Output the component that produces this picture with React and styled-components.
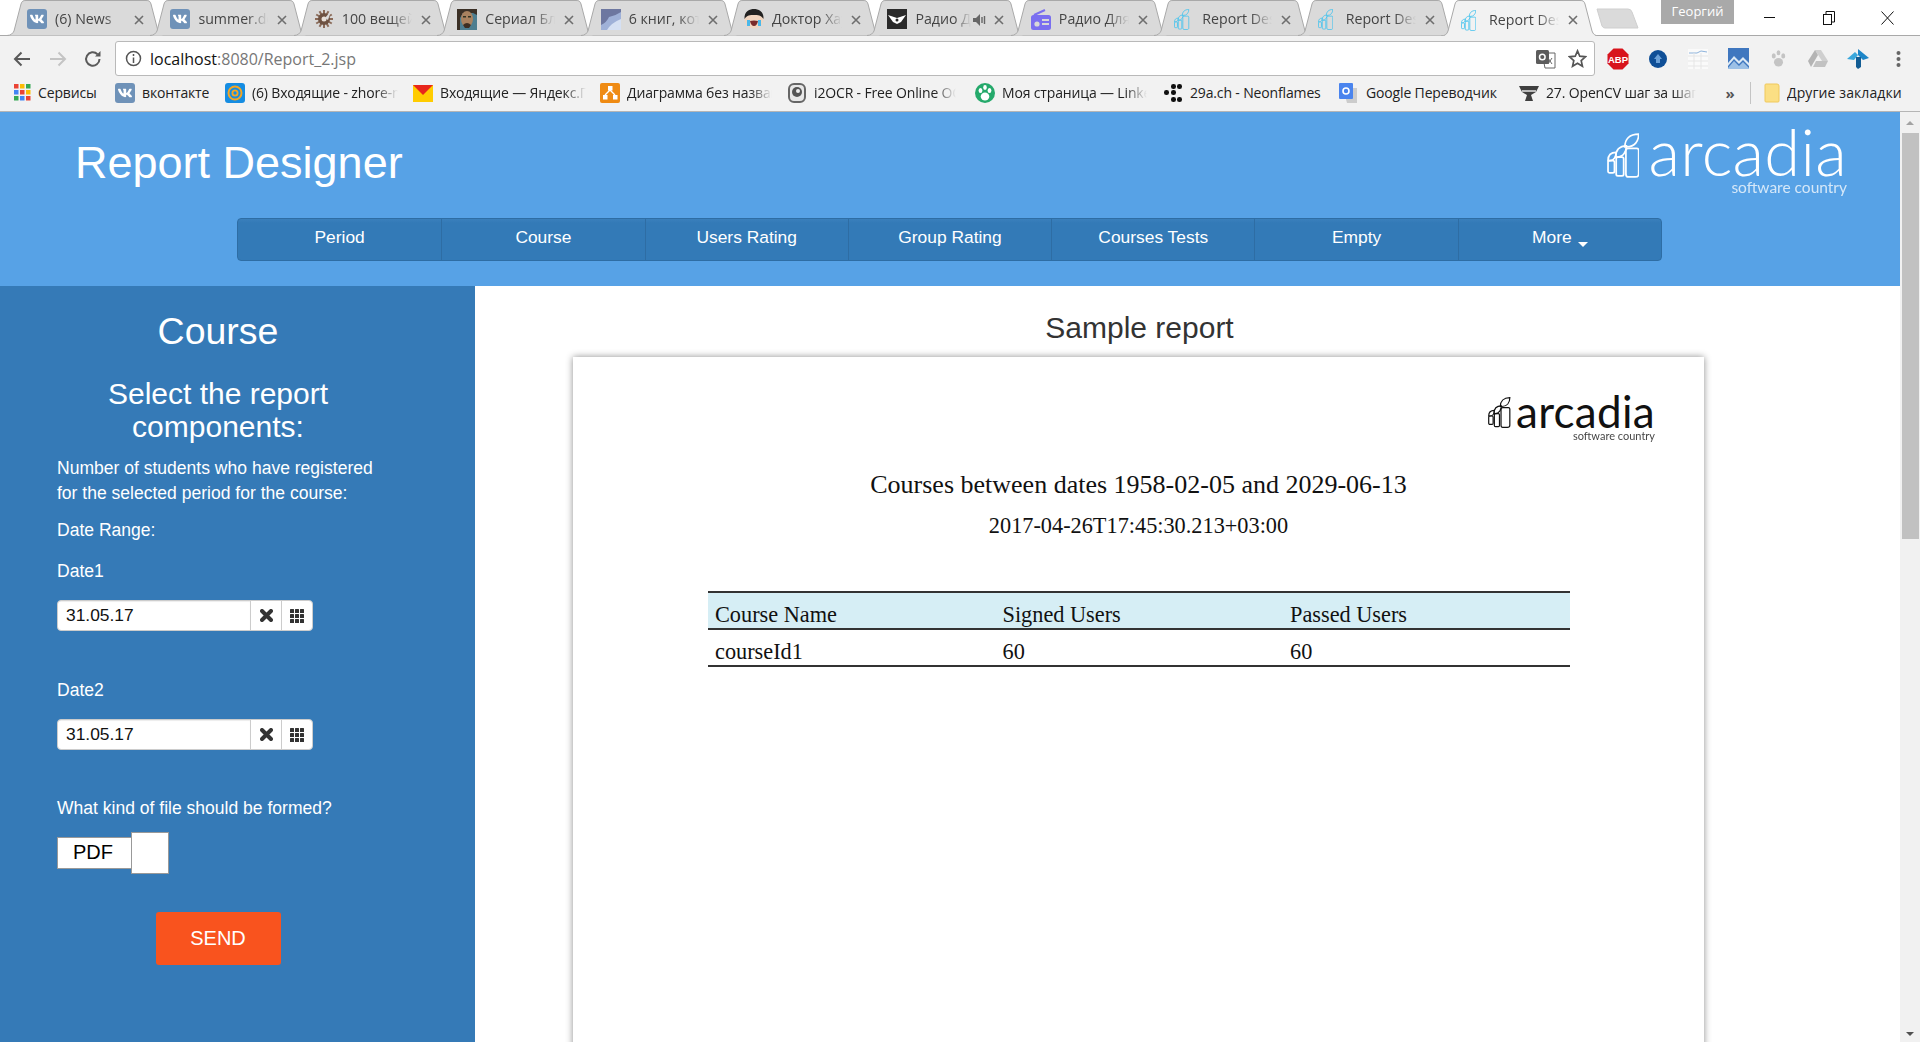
import React from "react";
import styled, { createGlobalStyle } from "styled-components";
import { FaVk } from "react-icons/fa";

const Global = createGlobalStyle`
  html, body { margin: 0; padding: 0; height: 100%; overflow: hidden; background: #fff; }
  * { box-sizing: border-box; }
  #root { height: 1042px; }
`;

const Root = styled.div`
  width: 1920px;
  height: 1042px;
  display: flex;
  flex-direction: column;
  overflow: hidden;
  font-family: "Liberation Sans", Arial, sans-serif;
`;

/* ---------- browser chrome ---------- */
const TabStrip = styled.div`
  height: 36px;
  display: flex;
  background: linear-gradient(#fff 35px, #a9a9a9 35px);
  padding-left: 7px;
  flex: none;
`;
const Tab = styled.div`
  position: relative;
  width: 158px;
  height: ${(p) => (p.$active ? 36 : 35)}px;
  margin-right: -14.6px;
  z-index: ${(p) => (p.$active ? 2 : 1)};
  display: flex;
  align-items: center;
  padding-left: 20px;
  flex: none;
`;
const TabShape = styled.svg`
  position: absolute;
  inset: 0;
  width: 158px;
  height: 36px;
`;
const TabIconBox = styled.span`
  position: relative;
  width: 20px;
  height: 20px;
  flex: none;
  display: block;
  margin-top: 3px;
`;
const TabTitle = styled.span`
  position: relative;
  margin-left: 8px;
  margin-top: 2px;
  width: ${(p) => (p.$short ? 56 : 70)}px;
  overflow: hidden;
  white-space: nowrap;
  font: 14.2px "Open Sans", sans-serif;
  color: #444;
  -webkit-mask-image: linear-gradient(90deg, #000 70%, transparent 100%);
  mask-image: linear-gradient(90deg, #000 70%, transparent 100%);
`;
const TabClose = styled.svg`
  position: absolute;
  left: 127px;
  top: 15px;
  width: 10px;
  height: 10px;
`;
const Speaker = styled.svg`
  position: absolute;
  left: 106px;
  top: 14px;
  width: 13px;
  height: 12px;
`;
const NewTab = styled.svg`
  position: relative;
  margin-left: 12px;
  margin-top: 8px;
  width: 44px;
  height: 21px;
  flex: none;
`;
const WindowArea = styled.div`
  margin-left: auto;
  padding-right: 3px;
  display: flex;
  height: 35px;
  align-items: flex-start;
`;
const Profile = styled.div`
  width: 73px;
  height: 24px;
  background: #a9a9a9;
  color: #fff;
  font: 13px "Open Sans", sans-serif;
  text-align: center;
  line-height: 22px;
  margin-right: 6px;
`;
const WinButton = styled.button`
  width: 59px;
  height: 35px;
  border: 0;
  background: none;
  padding: 0;
  display: flex;
  align-items: center;
  justify-content: center;
`;

const Toolbar = styled.div`
  height: 40px;
  background: #f2f2f2;
  display: flex;
  align-items: center;
  flex: none;
  padding-top: 5px;
`;
const NavIcons = styled.div`
  width: 115px;
  padding-left: 13px;
  display: flex;
  gap: 17.5px;
  align-items: center;
  flex: none;
`;
const AddressBox = styled.div`
  width: 1480px;
  height: 35px;
  background: #fff;
  border: 1px solid #b9b9b9;
  border-radius: 3px;
  display: flex;
  align-items: center;
  padding-left: 9px;
  flex: none;
  font: 16px "Open Sans", sans-serif;
  color: #111;
`;
const UrlHost = styled.span`
  margin-left: 8px;
`;
const UrlTail = styled.span`
  color: #777;
`;
const AddressActions = styled.div`
  margin-left: auto;
  display: flex;
  align-items: center;
  gap: 12px;
  padding-right: 7px;
`;
const ExtBar = styled.div`
  display: grid;
  grid-template-columns: repeat(8, 40px);
  justify-items: center;
  align-items: center;
  padding-left: 3px;
`;

const Bookmarks = styled.div`
  height: 36px;
  background: #f2f2f2;
  border-bottom: 1px solid #b5b5b5;
  display: flex;
  align-items: center;
  padding: 0 0 2px 14px;
  flex: none;
`;
const Bookmark = styled.div`
  width: ${(p) => p.$w}px;
  display: flex;
  align-items: center;
  gap: 7px;
  flex: none;
`;
const BookmarkText = styled.span`
  font: 14px "Open Sans", sans-serif;
  color: #222;
  white-space: nowrap;
  overflow: hidden;
  letter-spacing: ${(p) => (p.$wide ? 0.1 : -0.15)}px;
  ${(p) =>
    p.$fade
      ? `width:${p.$fade}px;-webkit-mask-image:linear-gradient(90deg,#000 85%,transparent);mask-image:linear-gradient(90deg,#000 85%,transparent);`
      : ""}
`;
const Chevrons = styled.span`
  font: bold 15px "Open Sans", sans-serif;
  color: #555;
  width: 30px;
  flex: none;
  text-align: center;
  margin-left: -4px;
`;
const BarSep = styled.span`
  width: 1px;
  height: 22px;
  background: #c4c4c4;
  margin: 0 13px 0 5px;
  flex: none;
`;

/* ---------- page ---------- */
const Viewport = styled.div`
  flex: 1;
  display: flex;
  min-height: 0;
`;
const Page = styled.div`
  width: 1900px;
  flex: none;
  display: flex;
  flex-direction: column;
`;
const Scrollbar = styled.div`
  width: 20px;
  flex: none;
  background: #f1f1f1;
  display: flex;
  flex-direction: column;
  align-items: center;
`;
const ScrollArrow = styled.div`
  height: ${(p) => (p.$down ? 17 : 21)}px;
  width: 100%;
  display: flex;
  align-items: center;
  justify-content: center;
  flex: none;
  &::before {
    content: "";
    border-left: 4px solid transparent;
    border-right: 4px solid transparent;
    ${(p) => (p.$down ? "border-top" : "border-bottom")}: 4px solid ${(p) => (p.$down ? "#505050" : "#a3a3a3")};
  }
`;
const ScrollThumb = styled.div`
  width: 17px;
  height: 406px;
  background: #c1c1c1;
  flex: none;
  margin-left: 1px;
`;
const ScrollSpace = styled.div`
  flex: 1;
`;

const Header = styled.header`
  height: 174px;
  background: #57a2e6;
  display: flex;
  flex-direction: column;
  flex: none;
`;
const HeaderTop = styled.div`
  height: 106px;
  padding: 0 53px 0 75px;
  display: flex;
  justify-content: space-between;
  align-items: flex-start;
`;
const Title = styled.h1`
  margin: 25px 0 0;
  font-size: 45px;
  line-height: 52px;
  font-weight: 400;
  color: #fff;
`;
const Nav = styled.nav`
  width: 1425px;
  height: 43px;
  margin: 0 0 0 237px;
  display: grid;
  grid-template-columns: repeat(7, 1fr);
  background: linear-gradient(#3a80bc, #337ab7 4px);
  border: 1px solid #2e6da4;
  border-radius: 4px;
`;
const NavItem = styled.a`
  display: flex;
  align-items: center;
  justify-content: center;
  padding-bottom: 4px;
  font-size: 17.4px;
  color: #fff;
  & + & {
    border-left: 1px solid #2e6da4;
  }
`;
const Caret = styled.span`
  display: inline-block;
  margin: 14px 0 0 6px;
  border-left: 5px solid transparent;
  border-right: 5px solid transparent;
  border-top: 5px solid #fff;
`;

const Body = styled.div`
  flex: 1;
  display: flex;
  min-height: 0;
`;
const Sidebar = styled.aside`
  width: 475px;
  flex: none;
  background: #357ab7;
  color: #fff;
  padding: 23px 0 0 57px;
`;
const SideTitle = styled.h2`
  margin: 0 0 0 -57px;
  padding-right: 39px;
  text-align: center;
  font-size: 37.5px;
  line-height: 44px;
  font-weight: 400;
`;
const SideSub = styled.h3`
  margin: 24px 0 0 -57px;
  padding: 0 39px 0 0;
  text-align: center;
  font-size: 30px;
  line-height: 33px;
  font-weight: 400;
`;
const SideText = styled.p`
  margin: ${(p) => p.$top}px 0 0;
  font-size: 17.55px;
  line-height: 25px;
`;
const DateGroup = styled.div`
  margin-top: 16px;
  width: 256px;
  height: 31px;
  display: flex;
  background: #fff;
  border: 1px solid #ccc;
  border-radius: 4px;
  overflow: hidden;
`;
const DateValue = styled.div`
  flex: 1;
  padding-left: 8px;
  font-size: 17.4px;
  line-height: 28px;
  color: #111;
  box-shadow: inset 0 1px 1px rgba(0, 0, 0, 0.075);
`;
const DateBtn = styled.div`
  width: 31px;
  flex: none;
  border-left: 1px solid #ccc;
  display: flex;
  align-items: center;
  justify-content: center;
`;
const FileRow = styled.div`
  margin-top: 11px;
  display: flex;
  align-items: center;
`;
const Select = styled.div`
  width: 74px;
  height: 32px;
  background: #fff;
  border: 1px solid #999;
  border-right: 0;
  padding-left: 15px;
  font-size: 20px;
  line-height: 28px;
  color: #000;
  flex: none;
`;
const SelectArrow = styled.div`
  width: 38px;
  height: 42px;
  background: #fff;
  border: 1px solid #999;
  flex: none;
`;
const SendRow = styled.div`
  margin: 38px 0 0 -57px;
  padding-right: 39px;
  display: flex;
  justify-content: center;
`;
const Send = styled.button`
  width: 125px;
  height: 53px;
  border: 0;
  border-radius: 3px;
  background: #f9531e;
  color: #fff;
  font: 20px "Liberation Sans", Arial, sans-serif;
`;

const Main = styled.main`
  flex: 1;
  background: #fff;
  padding-left: 98px;
  min-width: 0;
`;
const MainTitle = styled.h2`
  width: 1131px;
  margin: 24px 0 0;
  padding-left: 2px;
  text-align: center;
  font-size: 30px;
  line-height: 36px;
  font-weight: 400;
  color: #333;
`;
const Paper = styled.section`
  width: 1131px;
  height: 900px;
  margin-top: 11px;
  background: #fff;
  box-shadow: 0 0 7px rgba(0, 0, 0, 0.45);
  padding: 40px 49px 0 135px;
  font-family: "Liberation Serif", "Times New Roman", serif;
  color: #111;
`;
const PaperLogoRow = styled.div`
  display: flex;
  justify-content: flex-end;
`;
const ReportTitle = styled.div`
  margin: 26px 86px 0 0;
  text-align: center;
  font-size: 26px;
  line-height: 36px;
`;
const ReportDate = styled.div`
  margin: 8px 86px 0 0;
  text-align: center;
  font-size: 22.3px;
  line-height: 30px;
`;
const ReportTable = styled.div`
  margin: 50px 0 0;
  width: 862px;
  display: grid;
  grid-template-columns: 287.5px 287.5px 287px;
  font-size: 22.3px;
`;
const HeadCell = styled.div`
  height: 39px;
  background: #d6eef5;
  border-top: 2px solid #333;
  border-bottom: 2px solid #333;
  padding: 9px 0 0 7px;
  line-height: 26px;
`;
const RowCell = styled.div`
  height: 37px;
  border-bottom: 2px solid #333;
  padding: 8.5px 0 0 7px;
  line-height: 26px;
`;

/* ---------- logo ---------- */
const LogoWrap = styled.div`
  display: flex;
  align-items: flex-start;
  gap: ${(p) => (p.$small ? 5 : 9)}px;
  margin-top: ${(p) => (p.$small ? 0 : 21)}px;
  color: ${(p) => p.$color};
`;
const LogoWords = styled.div`
  display: flex;
  flex-direction: column;
  align-items: flex-end;
  margin-top: ${(p) => (p.$small ? -3 : -6)}px;
`;
const LogoName = styled.span`
  font-family: Lato, sans-serif;
  font-weight: ${(p) => (p.$small ? 400 : 300)};
  font-size: ${(p) => (p.$small ? 44 : 65)}px;
  line-height: ${(p) => (p.$small ? 34 : 48)}px;
  letter-spacing: 0.3px;
`;
const LogoTag = styled.span`
  font-family: Lato, sans-serif;
  font-weight: 400;
  font-size: ${(p) => (p.$small ? 11 : 15.5)}px;
  line-height: ${(p) => (p.$small ? 11 : 17)}px;
  opacity: ${(p) => (p.$small ? 0.8 : 0.75)};
  margin-top: ${(p) => (p.$small ? 2 : 4)}px;
`;

const Mark = ({ size, color }) => (
  <svg width={(size * 32) / 44} height={size} viewBox="0 0 32 44" fill="none" stroke={color} strokeWidth="1.7" style={{ flex: "none" }}>
    <path d="M17.5 13.5 C17.5 6 22 1 31 1 C31 8 27 13.5 19.5 13.5 Z" />
    <path d="M8.5 23.5 C8.5 17 12 12.5 19 12.5 C19 18 16 23.5 10 23.5 Z" />
    <path d="M1 27 C1 22 4 19 9 19 C9 23 7 27 3 27 Z" />
    <rect x="1" y="27" width="6.3" height="12" rx="1.6" />
    <rect x="9" y="23.5" width="7.3" height="18.5" rx="1.6" />
    <path d="M18.5 17 C18.5 15.5 19.5 15 21 15 H29 C30 15 31 15.5 31 17 V40 C31 42 29.5 43 27.5 43 H21 C19.5 43 18.5 42 18.5 40 Z" />
  </svg>
);

const Logo = ({ small, color }) => (
  <LogoWrap $color={color} $small={small}>
    <Mark size={small ? 31 : 45} color={color} />
    <LogoWords $small={small}>
      <LogoName $small={small}>arcadia</LogoName>
      <LogoTag $small={small}>software country</LogoTag>
    </LogoWords>
  </LogoWrap>
);

/* ---------- favicons ---------- */
const VkIcon = ({ s = 20 }) => (
  <svg width={s} height={s} viewBox="0 0 20 20">
    <rect width="20" height="20" rx="3" fill="#6f92b8" />
    <FaVk x="2.5" y="2.5" size="15" color="#fff" />
  </svg>
);
const GearIcon = () => (
  <svg width="20" height="20" viewBox="0 0 20 20">
    <g stroke="#8a6a58" strokeWidth="2">
      {[0, 30, 60, 90, 120, 150].map((a) => (
        <line key={a} x1="1" y1="10" x2="19" y2="10" transform={`rotate(${a} 10 10)`} />
      ))}
    </g>
    <circle cx="10" cy="10" r="6" fill="#6e5242" />
    <circle cx="10" cy="10" r="2.5" fill="#e8e0d8" />
    <path d="M11 9 L17 2 L14 11Z" fill="#ddd" />
  </svg>
);
const FaceIcon = () => (
  <svg width="20" height="21" viewBox="0 0 20 21">
    <rect width="20" height="21" fill="#4d7e90" />
    <path d="M0 0H20V6L16 4H6L3 9V21H0Z" fill="#3b3026" />
    <ellipse cx="10" cy="10" rx="6" ry="8" fill="#a9825f" />
    <path d="M6 16 Q10 12 14 16 L12 19H8Z" fill="#3d2e22" />
    <rect x="6" y="7" width="3" height="1.5" fill="#332" />
    <rect x="11" y="7" width="3" height="1.5" fill="#332" />
  </svg>
);
const BookIcon = () => (
  <svg width="20" height="21" viewBox="0 0 20 21">
    <rect width="20" height="21" fill="#6d77a0" />
    <path d="M0 21V16 Q6 13 8 8 Q14 7 20 3V21Z" fill="#9fb1d8" />
    <path d="M6 21 Q10 14 20 10V21Z" fill="#d5e0f3" />
  </svg>
);
const CartoonIcon = () => (
  <svg width="20" height="20" viewBox="0 0 20 20">
    <circle cx="10" cy="10" r="9.5" fill="#f1d5c0" />
    <path d="M0.5 10 C0 2 6 0 10 0 C14 0 20 2 19.5 10 C17 6 14 6 10 6 C6 6 3 6 0.5 10Z" fill="#222" />
    <path d="M6 12 Q10 11 14 12 Q13 17 10 17 Q7 17 6 12Z" fill="#7a2a2a" />
    <path d="M3 11 L6 11 L6 17 L3 17Z M14 11 L17 11 L17 17 L14 17Z" fill="#4ab8ea" />
  </svg>
);
const MaskIcon = () => (
  <svg width="20" height="20" viewBox="0 0 20 20">
    <rect width="20" height="20" fill="#2a2a2a" />
    <path d="M1 6 L10 9 L19 6 L14 13 L10 15 L6 13Z" fill="#fff" />
    <circle cx="10" cy="11" r="1.5" fill="#2a2a2a" />
  </svg>
);
const RadioIcon = () => (
  <svg width="20" height="21" viewBox="0 0 20 21">
    <path d="M3 6 L14 1" stroke="#7a6ff0" strokeWidth="2" />
    <rect y="6" width="20" height="15" rx="2.5" fill="#7a6ff0" />
    <circle cx="6" cy="15" r="2.6" fill="#d8d8d8" />
    <rect x="11" y="10" width="7" height="2" fill="#d8d8d8" />
    <rect x="11" y="14" width="7" height="2" fill="#d8d8d8" />
  </svg>
);
const ReportIcon = () => <Mark size={21} color="#48c3ee" />;

const AppsIcon = () => {
  const c = ["#ea4335", "#fbbc05", "#34a853", "#4285f4", "#ea4335", "#fbbc05", "#34a853", "#4285f4", "#ea4335"];
  return (
    <svg width="17" height="17" viewBox="0 0 17 17">
      {c.map((f, i) => (
        <rect key={i} x={(i % 3) * 6} y={Math.floor(i / 3) * 6} width="4.5" height="4.5" fill={f} />
      ))}
    </svg>
  );
};
const AtIcon = () => (
  <svg width="20" height="20" viewBox="0 0 20 20">
    <rect width="20" height="20" rx="3" fill="#168de2" />
    <circle cx="10" cy="10" r="6.5" fill="none" stroke="#f5a623" strokeWidth="2" />
    <circle cx="10" cy="10" r="2.6" fill="none" stroke="#f5a623" strokeWidth="1.8" />
  </svg>
);
const YandexIcon = () => (
  <svg width="20" height="20" viewBox="0 0 20 20">
    <rect y="2" width="20" height="17" fill="#ffcc00" />
    <path d="M0 2H20L10 12Z" fill="#e8261c" />
  </svg>
);
const DiagramIcon = () => (
  <svg width="20" height="20" viewBox="0 0 20 20">
    <rect width="20" height="20" rx="2" fill="#ef8b14" />
    <g fill="#fff">
      <rect x="8" y="3" width="4.5" height="4.5" />
      <rect x="3" y="12" width="4.5" height="4.5" />
      <rect x="13" y="12" width="4.5" height="4.5" />
    </g>
    <path d="M10 7 L5 12 M10 7 L15 12" stroke="#fff" strokeWidth="1.4" />
  </svg>
);
const OcrIcon = () => (
  <svg width="20" height="20" viewBox="0 0 20 20">
    <rect x="2" y="1" width="16" height="18" rx="5" fill="#e8e8e8" stroke="#666" strokeWidth="2" />
    <circle cx="10" cy="9" r="5" fill="#555" />
    <circle cx="11" cy="8" r="2" fill="#eee" />
  </svg>
);
const PawIcon = ({ s = 20, fill = "#fff", bg = "#25a96b" }) => (
  <svg width={s} height={s} viewBox="0 0 20 20">
    {bg !== "none" && <circle cx="10" cy="10" r="10" fill={bg} />}
    <g fill={fill}>
      <ellipse cx="5.5" cy="7.5" rx="1.9" ry="2.5" />
      <ellipse cx="14.5" cy="7.5" rx="1.9" ry="2.5" />
      <ellipse cx="10" cy="4.5" rx="1.8" ry="2.4" />
      <ellipse cx="10" cy="13.5" rx="4.3" ry="4" />
    </g>
  </svg>
);
const DotsIcon = () => (
  <svg width="20" height="20" viewBox="0 0 20 20" fill="#111">
    <rect x="8" y="1" width="5" height="5" rx="2.3" />
    <rect x="14" y="1" width="5" height="5" rx="2.3" />
    <rect x="1" y="7" width="5" height="5" rx="2.3" />
    <rect x="8" y="7" width="5" height="5" rx="2.3" />
    <rect x="8" y="14" width="5" height="5" rx="2.3" />
    <rect x="14" y="14" width="5" height="5" rx="2.3" />
  </svg>
);
const TranslateIcon = () => (
  <svg width="20" height="20" viewBox="0 0 20 20">
    <path d="M4 5H18V20H8Z" fill="#ccc" />
    <rect width="14" height="16" rx="1" fill="#4a84ee" />
    <circle cx="7" cy="8" r="3" fill="none" stroke="#fff" strokeWidth="1.6" />
  </svg>
);
const CvIcon = () => (
  <svg width="20" height="20" viewBox="0 0 20 20">
    <path d="M0 3H20L17 9L12 12L14 18H6L8 12L3 9Z" fill="#3f3f3f" />
    <path d="M3 8H17" stroke="#bbb" strokeWidth="2" />
  </svg>
);
const FolderIcon = () => (
  <svg width="16" height="20" viewBox="0 0 16 20">
    <path d="M1 2 Q1 1 2 1 H13 Q15 1 15 3 V18 Q15 19 14 19 H2 Q1 19 1 18Z" fill="#fbdf84" stroke="#f0c95c" />
  </svg>
);

const Glyph = {
  back: (
    <svg width="18" height="16" viewBox="0 0 18 16" fill="none" stroke="#5a5a5a" strokeWidth="2">
      <path d="M17 8H2 M8.5 1.5 L2 8 L8.5 14.5" />
    </svg>
  ),
  forward: (
    <svg width="18" height="16" viewBox="0 0 18 16" fill="none" stroke="#c4c4c4" strokeWidth="2">
      <path d="M1 8H16 M9.5 1.5 L16 8 L9.5 14.5" />
    </svg>
  ),
  reload: (
    <svg width="18" height="18" viewBox="0 0 18 18" fill="none" stroke="#5a5a5a" strokeWidth="2">
      <path d="M15.5 9 A6.7 6.7 0 1 1 13.5 4.2" />
      <path d="M11 6.5H16.5V1Z" fill="#5a5a5a" stroke="none" />
    </svg>
  ),
  info: (
    <svg width="17" height="17" viewBox="0 0 17 17" fill="none" stroke="#555" strokeWidth="1.5">
      <circle cx="8.5" cy="8.5" r="7" />
      <path d="M8.5 7.5V13 M8.5 4V6" />
    </svg>
  ),
  star: (
    <svg width="19" height="19" viewBox="0 0 20 20" fill="none" stroke="#555" strokeWidth="1.8">
      <path d="M10 2 L12.4 7.6 L18.4 8.2 L13.9 12.2 L15.2 18.2 L10 15.1 L4.8 18.2 L6.1 12.2 L1.6 8.2 L7.6 7.6Z" />
    </svg>
  ),
  gt: (
    <svg width="20" height="20" viewBox="0 0 20 20">
      <path d="M6 4H19V19H9Z" fill="#fff" stroke="#666" />
      <rect y="1" width="13" height="14" rx="1.5" fill="#5c5c5c" />
      <circle cx="6.3" cy="8" r="2.8" fill="none" stroke="#fff" strokeWidth="1.5" />
      <path d="M12 9 L16 15 M16 9 L12 15" stroke="#666" />
    </svg>
  ),
  abp: (
    <svg width="22" height="22" viewBox="0 0 22 22">
      <path d="M6.5 0.5H15.5L21.5 6.5V15.5L15.5 21.5H6.5L0.5 15.5V6.5Z" fill="#d8141c" />
      <text x="11" y="14.5" textAnchor="middle" fill="#fff" fontSize="9.5" fontWeight="700" fontFamily="Liberation Sans">ABP</text>
    </svg>
  ),
  up: (
    <svg width="20" height="20" viewBox="0 0 20 20">
      <circle cx="10" cy="10" r="9" fill="#0f4f97" />
      <path d="M10 5 L14 10 H12 V14 H8 V10 H6Z" fill="#6aa0d8" />
    </svg>
  ),
  doc: (
    <svg width="22" height="22" viewBox="0 0 22 22">
      <rect x="1" y="1" width="20" height="20" fill="#fafafa" />
      <path d="M2 5 L10 5 L14 3 L20 4" stroke="#8fb4dc" fill="none" />
      <path d="M1 8H21 M1 13H21 M1 18H21 M7 5V21 M14 5V21" stroke="#e6e6e6" />
    </svg>
  ),
  chart: (
    <svg width="21" height="21" viewBox="0 0 21 21">
      <rect width="21" height="21" fill="#3f77bf" />
      <path d="M0 15 L6 8 L11 13 L15 9 L21 15 V18 L15 12 L11 16 L6 11 L0 18 Z" fill="#dce9f5" />
      <path d="M0 20 L6 13 L11 18 L15 14 L21 20 V21 H0Z" fill="#9cc0e6" />
    </svg>
  ),
  drive: (
    <svg width="20" height="19" viewBox="0 0 20 19">
      <path d="M7 1H13L20 12H14Z" fill="#cfcfcf" />
      <path d="M7 1L0 12L3 18L10 6Z" fill="#b4b4b4" />
      <path d="M5 18H17L20 12H8Z" fill="#c2c2c2" />
    </svg>
  ),
  arrowExt: (
    <svg width="22" height="20" viewBox="0 0 22 20">
      <path d="M11 0 L22 9 L16 11 L11 6 Z" fill="#1d86c8" />
      <path d="M0 10 L8 3 L11 6 L7 11Z" fill="#3aa7dc" />
      <path d="M9 8 H14 V18 L11 20 L9 18Z" fill="#135d94" />
    </svg>
  ),
  dots: (
    <svg width="5" height="18" viewBox="0 0 5 18" fill="#666">
      <circle cx="2.5" cy="3" r="2" />
      <circle cx="2.5" cy="9" r="2" />
      <circle cx="2.5" cy="15" r="2" />
    </svg>
  ),
  times: (
    <svg width="13" height="13" viewBox="0 0 13 13" stroke="#333" strokeWidth="4" strokeLinecap="round">
      <path d="M2 2L11 11M11 2L2 11" />
    </svg>
  ),
  grid: (
    <svg width="14" height="14" viewBox="0 0 14 14" fill="#333">
      {[0, 5, 10].flatMap((y) => [0, 5, 10].map((x) => <rect key={`${x}-${y}`} x={x} y={y} width="4" height="4" rx="0.5" />))}
    </svg>
  ),
};

const TABS = [
  { t: "(6) News", i: <VkIcon /> },
  { t: "summer.dev", i: <VkIcon /> },
  { t: "100 вещей", i: <GearIcon /> },
  { t: "Сериал Блудливая", i: <FaceIcon /> },
  { t: "6 книг, которые", i: <BookIcon /> },
  { t: "Доктор Хаус", i: <CartoonIcon /> },
  { t: "Радио Дача", i: <MaskIcon />, sound: true },
  { t: "Радио Для Вас", i: <RadioIcon /> },
  { t: "Report Designer", i: <ReportIcon /> },
  { t: "Report Designer", i: <ReportIcon /> },
  { t: "Report Designer", i: <ReportIcon />, active: true },
];

const BOOKMARKS = [
  { w: 101, t: "Сервисы", i: <AppsIcon /> },
  { w: 110, t: "вконтакте", i: <VkIcon /> },
  { w: 188, t: "(6) Входящие - zhore-mail", i: <AtIcon />, f: 146 },
  { w: 187, t: "Входящие — Яндекс.Почта", i: <YandexIcon />, f: 146 },
  { w: 187, t: "Диаграмма без названия", i: <DiagramIcon />, f: 145 },
  { w: 188, t: "i2OCR - Free Online OCR", i: <OcrIcon />, f: 142 },
  { w: 188, t: "Моя страница — LinkedIn", i: <PawIcon />, f: 145 },
  { w: 176, t: "29a.ch - Neonflames", i: <DotsIcon /> },
  { w: 180, t: "Google Переводчик", i: <TranslateIcon /> },
  { w: 200, t: "27. OpenCV шаг за шагом", i: <CvIcon />, f: 150 },
];

const NAV = ["Period", "Course", "Users Rating", "Group Rating", "Courses Tests", "Empty"];

const DateField = () => (
  <DateGroup>
    <DateValue>31.05.17</DateValue>
    <DateBtn>{Glyph.times}</DateBtn>
    <DateBtn>{Glyph.grid}</DateBtn>
  </DateGroup>
);

export default function App() {
  return (
    <Root>
      <Global />
      <TabStrip>
        {TABS.map((tab, i) => (
          <Tab key={i} $active={tab.active}>
            <TabShape viewBox="0 0 158 36">
              <path
                d={
                  tab.active
                    ? "M0 36 C4 36 6 34 7 31 L14 4 C15 1 16 0.5 19 0.5 H139 C142 0.5 143 1 144 4 L151 31 C152 34 154 36 158 36"
                    : "M0 35.5 C4 35.5 6 33 7 31 L14 4 C15 1 16 0.5 19 0.5 H139 C142 0.5 143 1 144 4 L151 31 C152 33 154 35.5 158 35.5"
                }
                fill={tab.active ? "#f2f2f2" : "#dadada"}
                stroke="#a9a9a9"
              />
            </TabShape>
            <TabIconBox>{tab.i}</TabIconBox>
            <TabTitle $short={tab.sound}>{tab.t}</TabTitle>
            {tab.sound && (
              <Speaker viewBox="0 0 13 12" fill="#666">
                <path d="M0 4H3L7 0V12L3 8H0Z" />
                <path d="M9 3V9M11.5 2V10" stroke="#666" strokeWidth="1.4" />
              </Speaker>
            )}
            <TabClose viewBox="0 0 10 10" stroke="#6e6e6e" strokeWidth="1.6">
              <path d="M1 1L9 9M9 1L1 9" />
            </TabClose>
          </Tab>
        ))}
        <NewTab viewBox="0 0 44 21">
          <path d="M1 1 H32 Q35 1 36 4 L42 20 H9 Q7 20 6 18Z" fill="#dadada" stroke="#cfcfcf" />
        </NewTab>
        <WindowArea>
          <Profile>Георгий</Profile>
          <WinButton aria-label="minimize">
            <svg width="11" height="2"><rect width="11" height="1" fill="#111" /></svg>
          </WinButton>
          <WinButton aria-label="restore">
            <svg width="12" height="14" viewBox="0 0 12 14" fill="none" stroke="#111">
              <rect x="0.5" y="3.5" width="8" height="10" />
              <path d="M3 3V0.5H11.5V11H9" />
            </svg>
          </WinButton>
          <WinButton aria-label="close">
            <svg width="13" height="14" viewBox="0 0 13 14" stroke="#111">
              <path d="M0.5 0.5L12.5 13.5M12.5 0.5L0.5 13.5" />
            </svg>
          </WinButton>
        </WindowArea>
      </TabStrip>

      <Toolbar>
        <NavIcons>
          {Glyph.back}
          {Glyph.forward}
          {Glyph.reload}
        </NavIcons>
        <AddressBox>
          {Glyph.info}
          <UrlHost>localhost</UrlHost>
          <UrlTail>:8080/Report_2.jsp</UrlTail>
          <AddressActions>
            {Glyph.gt}
            {Glyph.star}
          </AddressActions>
        </AddressBox>
        <ExtBar>
          {Glyph.abp}
          {Glyph.up}
          {Glyph.doc}
          {Glyph.chart}
          <PawIcon s={21} fill="#c4c4c4" bg="none" />
          {Glyph.drive}
          {Glyph.arrowExt}
          {Glyph.dots}
        </ExtBar>
      </Toolbar>

      <Bookmarks>
        {BOOKMARKS.map((b) => (
          <Bookmark key={b.t} $w={b.w}>
            {b.i}
            <BookmarkText $fade={b.f}>{b.t}</BookmarkText>
          </Bookmark>
        ))}
        <Chevrons>»</Chevrons>
        <BarSep />
        <Bookmark $w={140}>
          <FolderIcon />
          <BookmarkText $wide>Другие закладки</BookmarkText>
        </Bookmark>
      </Bookmarks>

      <Viewport>
        <Page>
          <Header>
            <HeaderTop>
              <Title>Report Designer</Title>
              <Logo color="#fff" />
            </HeaderTop>
            <Nav>
              {NAV.map((n) => (
                <NavItem key={n}>{n}</NavItem>
              ))}
              <NavItem>
                More <Caret />
              </NavItem>
            </Nav>
          </Header>
          <Body>
            <Sidebar>
              <SideTitle>Course</SideTitle>
              <SideSub>
                Select the report
                <br />
                components:
              </SideSub>
              <SideText $top={13}>
                Number of students who have registered
                <br />
                for the selected period for the course:
              </SideText>
              <SideText $top={12}>Date Range:</SideText>
              <SideText $top={16}>Date1</SideText>
              <DateField />
              <SideText $top={47}>Date2</SideText>
              <DateField />
              <SideText $top={46}>What kind of file should be formed?</SideText>
              <FileRow>
                <Select>PDF</Select>
                <SelectArrow />
              </FileRow>
              <SendRow>
                <Send>SEND</Send>
              </SendRow>
            </Sidebar>
            <Main>
              <MainTitle>Sample report</MainTitle>
              <Paper>
                <PaperLogoRow>
                  <Logo small color="#111" />
                </PaperLogoRow>
                <ReportTitle>Courses between dates 1958-02-05 and 2029-06-13</ReportTitle>
                <ReportDate>2017-04-26T17:45:30.213+03:00</ReportDate>
                <ReportTable>
                  <HeadCell>Course Name</HeadCell>
                  <HeadCell>Signed Users</HeadCell>
                  <HeadCell>Passed Users</HeadCell>
                  <RowCell>courseId1</RowCell>
                  <RowCell>60</RowCell>
                  <RowCell>60</RowCell>
                </ReportTable>
              </Paper>
            </Main>
          </Body>
        </Page>
        <Scrollbar>
          <ScrollArrow />
          <ScrollThumb />
          <ScrollSpace />
          <ScrollArrow $down />
        </Scrollbar>
      </Viewport>
    </Root>
  );
}
